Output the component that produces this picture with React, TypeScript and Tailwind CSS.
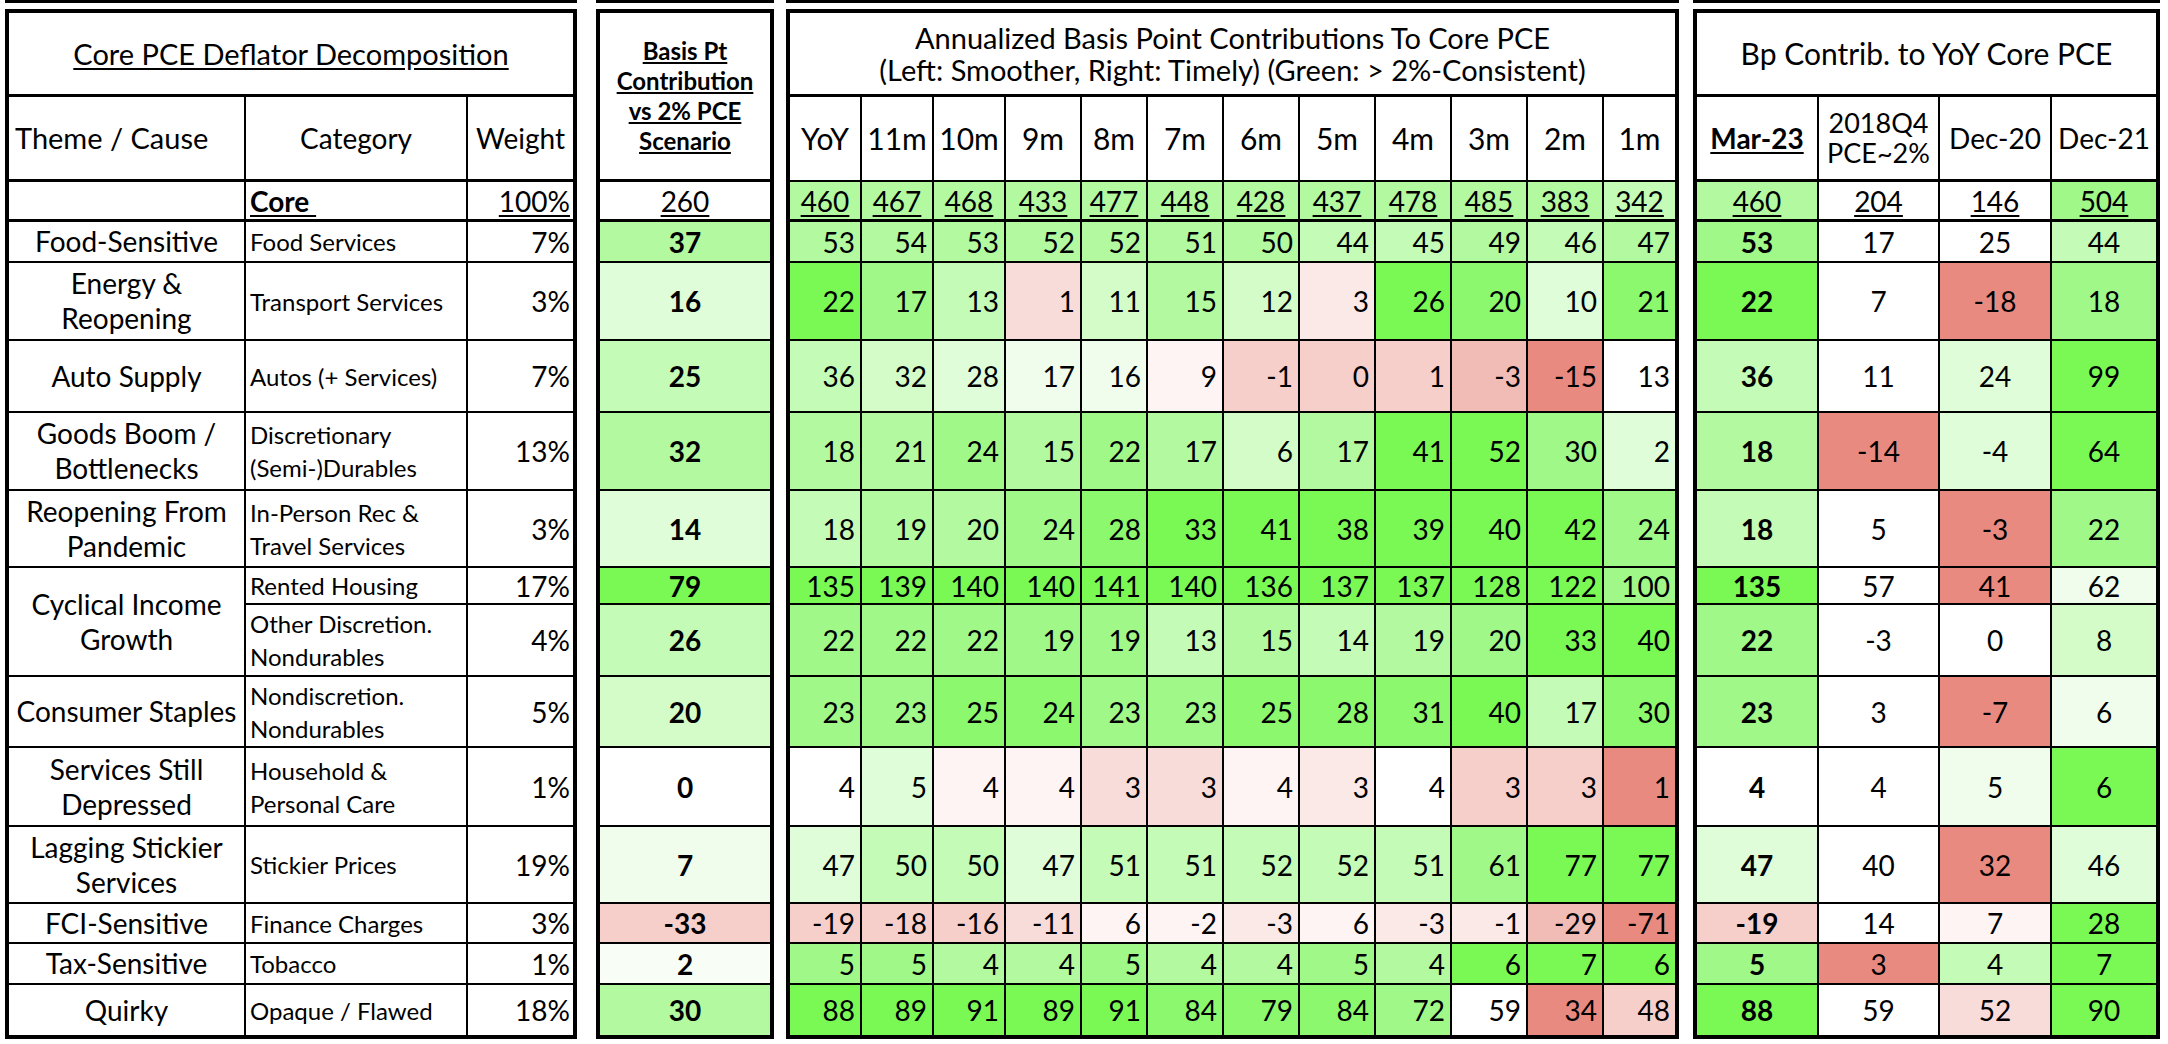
const BG: Record<string, string> = {
  g7: "bg-[#7af954]",
  g6: "bg-[#8cf86d]",
  g5: "bg-[#a0f889]",
  g4: "bg-[#b2f9a0]",
  g3: "bg-[#c4fbb6]",
  g2: "bg-[#d3fcc8]",
  g1: "bg-[#e0fdd9]",
  g0: "bg-[#f0fded]",
  t: "bg-[#f8fef6]",
  w: "bg-white",
  r0: "bg-[#fdf4f3]",
  r1: "bg-[#fbe9e7]",
  r2: "bg-[#f8dcd9]",
  r3: "bg-[#f6cfcb]",
  r4: "bg-[#f1bcb6]",
  r5: "bg-[#e98a80]",
};

type Row = {
  theme: string[] | null;
  span?: boolean;
  cat: string[];
  weight: string;
  p: string;
  m: string;
  r: string;
};

const rows: Row[] = [
  { theme: ["Food-Sensitive"], cat: ["Food Services"], weight: "7%", p: "37:g4", m: "53:g4 54:g4 53:g4 52:g4 52:g4 51:g4 50:g4 44:g3 45:g3 49:g4 46:g3 47:g4", r: "53:g5 17:w 25:w 44:g3" },
  { theme: ["Energy &", "Reopening"], cat: ["Transport Services"], weight: "3%", p: "16:g1", m: "22:g7 17:g5 13:g3 1:r2 11:g2 15:g4 12:g2 3:r1 26:g7 20:g6 10:g1 21:g6", r: "22:g7 7:w -18:r5 18:g5" },
  { theme: ["Auto Supply"], cat: ["Autos (+ Services)"], weight: "7%", p: "25:g3", m: "36:g3 32:g2 28:g1 17:g0 16:g0 9:r0 -1:r3 0:r3 1:r3 -3:r4 -15:r5 13:w", r: "36:g3 11:w 24:g1 99:g7" },
  { theme: ["Goods Boom /", "Bottlenecks"], cat: ["Discretionary", "(Semi-)Durables"], weight: "13%", p: "32:g4", m: "18:g4 21:g4 24:g5 15:g4 22:g5 17:g4 6:g2 17:g4 41:g7 52:g7 30:g5 2:g1", r: "18:g4 -14:r5 -4:g1 64:g7" },
  { theme: ["Reopening From", "Pandemic"], cat: ["In-Person Rec &", "Travel Services"], weight: "3%", p: "14:g1", m: "18:g3 19:g4 20:g4 24:g5 28:g6 33:g7 41:g7 38:g7 39:g7 40:g7 42:g7 24:g5", r: "18:g3 5:w -3:r5 22:g5" },
  { theme: ["Cyclical Income", "Growth"], span: true, cat: ["Rented Housing"], weight: "17%", p: "79:g7", m: "135:g7 139:g7 140:g7 140:g7 141:g7 140:g7 136:g7 137:g7 137:g7 128:g7 122:g7 100:g5", r: "135:g7 57:w 41:r5 62:g0" },
  { theme: null, cat: ["Other Discretion.", "Nondurables"], weight: "4%", p: "26:g3", m: "22:g5 22:g5 22:g5 19:g5 19:g5 13:g3 15:g4 14:g3 19:g4 20:g5 33:g7 40:g7", r: "22:g5 -3:w 0:w 8:g2" },
  { theme: ["Consumer Staples"], cat: ["Nondiscretion.", "Nondurables"], weight: "5%", p: "20:g2", m: "23:g5 23:g5 25:g6 24:g6 23:g5 23:g5 25:g6 28:g6 31:g6 40:g7 17:g3 30:g6", r: "23:g5 3:w -7:r5 6:g0" },
  { theme: ["Services Still", "Depressed"], cat: ["Household &", "Personal Care"], weight: "1%", p: "0:w", m: "4:w 5:g1 4:r0 4:r0 3:r2 3:r2 4:r0 3:r1 4:w 3:r3 3:r3 1:r5", r: "4:w 4:w 5:g0 6:g7" },
  { theme: ["Lagging Stickier", "Services"], cat: ["Stickier Prices"], weight: "19%", p: "7:g0", m: "47:g1 50:g3 50:g3 47:g1 51:g3 51:g3 52:g3 52:g3 51:g3 61:g5 77:g7 77:g7", r: "47:g1 40:w 32:r5 46:g1" },
  { theme: ["FCI-Sensitive"], cat: ["Finance Charges"], weight: "3%", p: "-33:r3", m: "-19:r3 -18:r3 -16:r3 -11:r2 6:r0 -2:r0 -3:r1 6:r0 -3:r1 -1:r1 -29:r4 -71:r5", r: "-19:r3 14:w 7:r0 28:g7" },
  { theme: ["Tax-Sensitive"], cat: ["Tobacco"], weight: "1%", p: "2:t", m: "5:g5 5:g5 4:g4 4:g4 5:g5 4:g4 4:g4 5:g5 4:g4 6:g7 7:g7 6:g7", r: "5:g5 3:r5 4:g3 7:g7" },
  { theme: ["Quirky"], cat: ["Opaque / Flawed"], weight: "18%", p: "30:g4", m: "88:g7 89:g7 91:g7 89:g7 91:g7 84:g6 79:g6 84:g6 72:g5 59:w 34:r5 48:r3", r: "88:g7 59:w 52:r2 90:g7" },
];

const months = ["YoY", "11m", "10m", "9m", "8m", "7m", "6m", "5m", "4m", "3m", "2m", "1m"];
const coreMonths = "460:g4 467:g4 468:g4 433:g4 477:g4 448:g4 428:g4 437:g4 478:g4 485:g4 383:g4 342:g3";
const coreRight = "460:g4 204:w 146:w 504:g5";

const parse = (s: string) => s.split(" ").map((x) => { const [v, c] = x.split(":"); return { v, c }; });

const ROWS = "grid-rows-[84px_85px_40px_41px_78px_72px_78px_77px_37px_72px_71px_79px_77px_40px_41px_50px]";

const Panel = ({ cols, className, children }: { cols: string; className?: string; children: React.ReactNode }) => (
  <div className={`flex shrink-0 flex-col ${className ?? ""}`}>
    <div className="h-[3px] bg-black" />
    <div className={`mt-[6px] grid border-4 border-black ${cols} ${ROWS}`}>{children}</div>
  </div>
);

const App = () => {
  const last = rows.length - 1;
  const bb = (i: number) => (i === last ? "" : "border-b-2");

  return (
    <div className="flex h-[1044px] w-[2168px] items-start overflow-hidden bg-white pl-[5px] font-['Lato',sans-serif] text-black">
      {/* decomposition */}
      <Panel cols="grid-cols-[237px_222px_105px]">
        <div className="col-span-3 flex items-center justify-center border-b-[3px] border-black text-[29px] underline underline-offset-[3px]">
          Core PCE Deflator Decomposition
        </div>
        <div className="flex items-center border-r-2 border-b-[3px] border-black pl-[6px] text-[29px]">Theme / Cause</div>
        <div className="flex items-center justify-center border-r-2 border-b-[3px] border-black text-[28px]">Category</div>
        <div className="flex items-center justify-center border-b-[3px] border-black text-[28px]">Weight</div>
        <div className="border-r-2 border-b-[3px] border-black" />
        <div className="flex items-center border-r-2 border-b-[3px] border-black pl-[4px] text-[28px] font-bold underline underline-offset-[3px]">Core&nbsp;</div>
        <div className="flex items-center justify-end border-b-[3px] border-black pr-[3px] text-[28px] underline underline-offset-[3px]">100%</div>
        {rows.map((r, i) => (
          <div key={i} className="contents">
            {r.theme && (
              <div className={`flex flex-col items-center justify-center border-r-2 border-black text-[28px] leading-[35px] whitespace-nowrap ${r.span ? "row-span-2" : ""} ${r.span ? bb(i + 1) : bb(i)}`}>
                {r.theme.map((t) => <span key={t}>{t}</span>)}
              </div>
            )}
            <div className={`flex flex-col justify-center border-r-2 border-black pl-[4px] text-[24px] leading-[33px] whitespace-nowrap ${bb(i)}`}>
              {r.cat.map((t) => <span key={t}>{t}</span>)}
            </div>
            <div className={`flex items-center justify-end border-black pr-[3px] text-[28px] ${bb(i)}`}>{r.weight}</div>
          </div>
        ))}
      </Panel>

      {/* basis pt vs 2% */}
      <Panel cols="grid-cols-[170px]" className="ml-[19px]">
        <div className="row-span-2 flex flex-col items-center justify-center border-b-[3px] border-black text-[24px] leading-[30px] font-bold underline underline-offset-[2px]">
          <span>Basis Pt</span>
          <span>Contribution</span>
          <span>vs 2% PCE</span>
          <span>Scenario</span>
        </div>
        <div className="flex items-center justify-center border-b-[3px] border-black text-[28px] underline underline-offset-[3px]">260</div>
        {rows.map((r, i) => {
          const [c] = parse(r.p);
          return (
            <div key={i} className={`flex items-center justify-center border-black text-[28px] font-bold ${BG[c.c]} ${bb(i)}`}>
              {c.v}
            </div>
          );
        })}
      </Panel>

      {/* annualized monthly */}
      <Panel cols="grid-cols-[72px_72px_72px_76px_66px_76px_76px_76px_76px_76px_76px_71px]" className="ml-[12px]">
        <div className="col-span-12 flex flex-col items-center justify-center border-b-[3px] border-black text-[29px] leading-[32px]">
          <span>Annualized Basis Point Contributions To Core PCE</span>
          <span>(Left: Smoother, Right: Timely) (Green: &gt; 2%-Consistent)</span>
        </div>
        {months.map((m, j) => (
          <div key={m} className={`flex items-center justify-center border-b-2 border-black text-[30px] ${j < 11 ? "border-r-2" : ""}`}>
            {m}
          </div>
        ))}
        {parse(coreMonths).map((c, j) => (
          <div key={j} className={`flex items-center justify-center border-b-[3px] border-black text-[28px] underline underline-offset-[3px] ${BG[c.c]} ${j < 11 ? "border-r-2" : ""}`}>
            {c.v}
          </div>
        ))}
        {rows.map((r, i) =>
          parse(r.m).map((c, j) => (
            <div key={`${i}-${j}`} className={`flex items-center justify-end border-black pr-[5px] text-[28px] ${BG[c.c]} ${bb(i)} ${j < 11 ? "border-r-2" : ""}`}>
              {c.v}
            </div>
          ))
        )}
      </Panel>

      {/* yoy bp contributions */}
      <Panel cols="grid-cols-[122px_121px_112px_104px]" className="ml-[14px]">
        <div className="col-span-4 flex items-center justify-center border-b-[3px] border-black text-[30px]">Bp Contrib. to YoY Core PCE</div>
        <div className="flex items-center justify-center border-r-2 border-b-[3px] border-black text-[28px] font-bold underline underline-offset-[3px]">Mar-23</div>
        <div className="flex flex-col items-center justify-center border-r-2 border-b-[3px] border-black text-[27px] leading-[30px]">
          <span>2018Q4</span>
          <span>PCE~2%</span>
        </div>
        <div className="flex items-center justify-center border-r-2 border-b-[3px] border-black text-[28px]">Dec-20</div>
        <div className="flex items-center justify-center border-b-[3px] border-black text-[28px]">Dec-21</div>
        {parse(coreRight).map((c, j) => (
          <div key={j} className={`flex items-center justify-center border-b-[3px] border-black text-[28px] underline underline-offset-[3px] ${BG[c.c]} ${j < 3 ? "border-r-2" : ""}`}>
            {c.v}
          </div>
        ))}
        {rows.map((r, i) =>
          parse(r.r).map((c, j) => (
            <div key={`${i}-${j}`} className={`flex items-center justify-center border-black text-[28px] ${j === 0 ? "font-bold" : ""} ${BG[c.c]} ${bb(i)} ${j < 3 ? "border-r-2" : ""}`}>
              {c.v}
            </div>
          ))
        )}
      </Panel>
    </div>
  );
};

export default App;
